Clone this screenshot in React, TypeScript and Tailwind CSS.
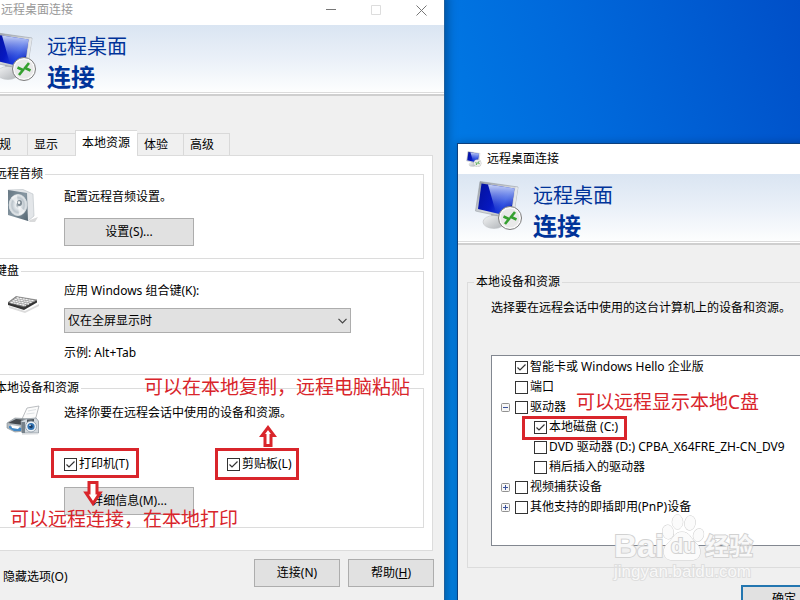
import type { ReactNode } from "react";
import clsx from "clsx";

function ComputerIcon({ className }: { className: string }) {
  return (
    <svg viewBox="0 0 50 50" className={className} aria-hidden="true">
      <defs>
        <linearGradient id="screen" x1="0" y1="0.2" x2="1" y2="0.6">
          <stop offset="0" stopColor="#0412a0" />
          <stop offset="0.45" stopColor="#0618c0" />
          <stop offset="0.75" stopColor="#1a3cdc" />
          <stop offset="1" stopColor="#0a20b8" />
        </linearGradient>
        <linearGradient id="glare" x1="0" y1="0" x2="0" y2="1">
          <stop offset="0" stopColor="#d3defa" stopOpacity="0.95" />
          <stop offset="0.5" stopColor="#7f9af0" stopOpacity="0.6" />
          <stop offset="1" stopColor="#3a5ae0" stopOpacity="0" />
        </linearGradient>
        <linearGradient id="frame" x1="0" y1="0" x2="1" y2="1">
          <stop offset="0" stopColor="#8d949c" />
          <stop offset="0.5" stopColor="#d5d8dc" />
          <stop offset="1" stopColor="#a4a9ae" />
        </linearGradient>
        <linearGradient id="stand" x1="0" y1="0" x2="1" y2="1">
          <stop offset="0" stopColor="#f3f4f5" />
          <stop offset="1" stopColor="#aeb2b6" />
        </linearGradient>
      </defs>
      <path d="M17 33 L28 36 L28 43 L18 42 Z" fill="#a8acb0" />
      <ellipse cx="20" cy="42" rx="11" ry="6.500" fill="url(#stand)" stroke="#c0c3c6" strokeWidth="0.6" />
      <path d="M6 1.500 L44 7 L39 39 L1.500 31 Z" fill="url(#frame)" stroke="#9aa0a6" strokeWidth="0.6" />
      <path d="M41.500 7 L44 7.400 L39 39 L37 38 Z" fill="#e4e7ea" />
      <path d="M7.500 3.500 L40.500 8.500 L36.500 36.500 L4 29 Z" fill="url(#screen)" />
      <path d="M14 4.600 L40.500 8.500 L38 25 L22 33 Z" fill="url(#glare)" />
      <circle cx="36" cy="38" r="11.500" fill="#fafafa" stroke="#7c7c7c" strokeWidth="1" />
      <circle cx="36" cy="38" r="9.600" fill="#e9e9e9" />
      <g fill="none" stroke="#35a02f" strokeWidth="2.600">
        <path d="M29.500 36.500 L35 39 L31 44" />
        <path d="M42.500 39.500 L37 37 L41 32" />
      </g>
    </svg>
  );
}

function SpeakerIcon() {
  return (
    <svg viewBox="0 0 36 36" className="h-9 w-9 shrink-0" aria-hidden="true">
      <defs>
        <linearGradient id="spk" x1="0" y1="0" x2="1" y2="1">
          <stop offset="0" stopColor="#667783" />
          <stop offset="0.5" stopColor="#8797a2" />
          <stop offset="1" stopColor="#526470" />
        </linearGradient>
        <radialGradient id="cone">
          <stop offset="0" stopColor="#8f9aa2" />
          <stop offset="0.3" stopColor="#e9edf0" />
          <stop offset="0.7" stopColor="#bcc5cc" />
          <stop offset="1" stopColor="#eef1f3" />
        </radialGradient>
      </defs>
      <path d="M24 31 L32 28 L29 33 L23 33 Z" fill="#d9dadb" />
      <path d="M2 1 L17 0.500 L27 5 L28 27 L22 32 Z" fill="#e3e6e9" stroke="#b9c0c5" strokeWidth="0.6" />
      <path d="M2 1 L21 4 L22 32 L2 26 Z" fill="url(#spk)" />
      <ellipse cx="12" cy="16" rx="8.800" ry="10.500" fill="url(#cone)" stroke="#d6dce0" />
      <path d="M12 16 L5 9 A9 10 0 0 1 11 6 Z M12 16 L19 22 A9 10 0 0 1 13 26 Z" fill="#fff" opacity="0.6" />
      <ellipse cx="13.500" cy="14" rx="2.500" ry="3" fill="#7e8b94" />
      <ellipse cx="13" cy="13.400" rx="1.200" ry="1.500" fill="#f4f6f7" />
    </svg>
  );
}

function KeyboardIcon() {
  return (
    <svg viewBox="0 0 36 36" className="h-9 w-9 shrink-0" aria-hidden="true">
      <path d="M3 23 L19 28 L33 21 L33 23 L19 30 L3 25 Z" fill="#dcdcdc" />
      <path d="M2 19 L2 22 L18 27 L31 19.500 L31 17.500 Z" fill="#343434" />
      <path d="M2 19.500 L10 13.500 L31 17 L18 24 Z" fill="#8f8f8f" stroke="#666" strokeWidth="0.6" />
      <g stroke="#f4f4f4" strokeWidth="1.400" strokeDasharray="2.400 0.600">
        <path d="M10.500 14.800 L28.500 18" />
        <path d="M8.500 16.300 L26 19.500" />
        <path d="M6.500 17.800 L23 21" />
        <path d="M4.500 19.300 L20 22.500" />
      </g>
    </svg>
  );
}

function DevicesIcon() {
  return (
    <svg viewBox="0 0 36 36" className="h-9 w-9 shrink-0" aria-hidden="true">
      <path d="M21 3 L33 1 L29 16 L16 14 Z" fill="#fbfbfb" stroke="#a9adb1" strokeWidth="0.8" />
      <path d="M22 6 L30 4.500 M20.500 9 L28.500 8" stroke="#dde1e4" />
      <path d="M1 18 L9 13 L24 14 L19 26 L9 27 L1 23 Z" fill="#b5bcc2" stroke="#81898f" strokeWidth="0.6" />
      <path d="M2 18 L10 14 L22 15 L17 20 Z" fill="#44494e" />
      <path d="M3 21 L16 23 L15 26 L8 26 L3 23 Z" fill="#4388c4" />
      <path d="M5 20 L14 21.500 L12 24 L6 23 Z" fill="#fff" />
      <path d="M15 16 L20 14 L30 13 L32.500 16 L32.500 28 L16 28 Z" fill="#d3d9de" stroke="#87919a" strokeWidth="0.7" />
      <path d="M15.500 17 L19 17 L19 28 L16 28 Z" fill="#77828b" />
      <path d="M21 14.500 L28 14 L28 17 L21 17 Z" fill="#4b545c" />
      <circle cx="25" cy="21.500" r="5.500" fill="#eef3f7" stroke="#8b98a3" strokeWidth="0.8" />
      <circle cx="25" cy="21.500" r="3.600" fill="#3475b4" />
      <circle cx="25" cy="21.500" r="1.700" fill="#173b66" />
      <circle cx="24" cy="20.300" r="0.800" fill="#fff" />
      <path d="M16 29.500 L32 29" stroke="#e4e6e8" />
    </svg>
  );
}

function Checkbox({ label, checked = false }: { label: string; checked?: boolean }) {
  return (
    <label className="flex items-center gap-0.5 leading-4 whitespace-nowrap">
      <span className="grid">
        <input
          type="checkbox"
          defaultChecked={checked}
          className="peer col-start-1 row-start-1 h-[13px] w-[13px] appearance-none border border-[#333] bg-white"
        />
        <svg
          viewBox="0 0 13 13"
          className="pointer-events-none invisible col-start-1 row-start-1 h-[13px] w-[13px] peer-checked:visible"
          aria-hidden="true"
        >
          <path d="M2.500 6.500 L5 9 L10.500 3.500" fill="none" stroke="#333" strokeWidth="1.200" />
        </svg>
      </span>
      {label}
    </label>
  );
}

function PushButton({ children, className }: { children: ReactNode; className?: string }) {
  return (
    <button type="button" className={clsx("h-7 border border-[#adadad] bg-[#e1e1e1] leading-4", className)}>
      {children}
    </button>
  );
}

function Banner() {
  return (
    <header>
      <div className="flex h-[67px] gap-[9px] bg-linear-to-b from-[#dae5f2] via-[#eaf0f8] to-[#fdfefe] pt-[6px] pl-4">
        <ComputerIcon className="h-[50px] w-[50px] shrink-0" />
        <h1 className="pt-0.5 text-[#003399]">
          <span className="block text-[20px] leading-7">远程桌面</span>
          <strong className="block text-[24px] leading-8 font-bold">连接</strong>
        </h1>
      </div>
      <div className="h-1 border-t border-b-2 border-t-[#dcdcdc] border-b-[#cfcfcf] bg-white" />
    </header>
  );
}

function TitleBar({ active = false }: { active?: boolean }) {
  return (
    <div className={clsx("flex h-[30px] items-center bg-white pl-2", active ? "text-black" : "text-[#999]")}>
      <ComputerIcon className="mr-[5px] h-4 w-4" />
      <span className="flex-1">远程桌面连接</span>
      {!active && (
        <>
          <button type="button" aria-label="最小化" className="flex h-full w-[45px] items-center justify-center">
            <svg viewBox="0 0 11 11" className="h-[11px] w-[11px]">
              <path d="M0 4.500 H10" stroke="#777" />
            </svg>
          </button>
          <button type="button" aria-label="最大化" disabled className="flex h-full w-[45px] items-center justify-center">
            <svg viewBox="0 0 11 11" className="h-[11px] w-[11px]">
              <path d="M0.500 0.500 H9.500 V9.500 H0.500 Z" fill="none" stroke="#ddd" />
            </svg>
          </button>
        </>
      )}
      <button type="button" aria-label="关闭" className="flex h-full w-[45px] items-center justify-center">
        <svg viewBox="0 0 11 11" className="h-[11px] w-[11px]">
          <path d="M0.500 0.500 L10.500 10.500 M10.500 0.500 L0.500 10.500" fill="none" stroke="#777" />
        </svg>
      </button>
    </div>
  );
}

function Group({ legend, icon, className, children }: { legend: string; icon: ReactNode; className: string; children: ReactNode }) {
  return (
    <fieldset className="min-w-0 border border-[#dcdcdc]">
      <legend className="ml-px px-0.5 leading-4">{legend}</legend>
      <div className={clsx("flex gap-[22px] pl-[14px]", className)}>
        {icon}
        <div className="flex-1">{children}</div>
      </div>
    </fieldset>
  );
}

const TABS = [
  { name: "常规", width: "w-[47px]" },
  { name: "显示", width: "w-12" },
  { name: "本地资源", width: "w-[62px]" },
  { name: "体验", width: "w-[46px]" },
  { name: "高级", width: "w-[47px]" },
];

function OptionsWindow() {
  return (
    <section className="absolute -top-[6px] -left-[29px] min-h-[620px] w-[474px] border border-[#1f5f9c] bg-[#f0f0f0] shadow-[2px_0_10px_rgba(0,0,0,0.35)]">
      <TitleBar />
      <Banner />
      <div role="tablist" className="mt-[34px] flex items-end pl-2">
        {TABS.map((tab) => {
          const selected = tab.name === "本地资源";
          return (
            <button
              key={tab.name}
              type="button"
              role="tab"
              aria-selected={selected}
              className={clsx(
                "border-t border-l border-[#d9d9d9] pl-[6px] text-left leading-4 last:border-r",
                tab.width,
                selected ? "relative -mb-px h-[26px] bg-white pb-px" : "h-[22px]",
              )}
            >
              {tab.name}
            </button>
          );
        })}
      </div>
      <div role="tabpanel" className="mr-[11px] ml-[10px] flex flex-col border border-[#dcdcdc] bg-white px-2 pt-[10px] pb-[22px]">
        <Group legend="远程音频" icon={<SpeakerIcon />} className="pt-[7px] pb-3">
          <p className="leading-4">配置远程音频设置。</p>
          <PushButton className="mt-[13px] w-[130px]">设置(S)...</PushButton>
        </Group>
        <div className="pt-1">
          <Group legend="键盘" icon={<KeyboardIcon />} className="pt-1 pb-[13px]">
            <label htmlFor="keys" className="block leading-4">
              应用 Windows 组合键(K):
            </label>
            <div className="mt-[9px] grid w-[287px] items-center">
              <select
                id="keys"
                className="col-start-1 row-start-1 h-[25px] appearance-none border border-[#adadad] bg-[#e1e1e1] pl-[3px]"
              >
                <option>仅在全屏显示时</option>
              </select>
              <svg
                viewBox="0 0 9 6"
                className="pointer-events-none col-start-1 row-start-1 mr-1 h-[6px] w-[9px] justify-self-end"
                aria-hidden="true"
              >
                <path d="M0.500 0.800 L4.500 4.800 L8.500 0.800" fill="none" stroke="#444" strokeWidth="1.200" />
              </svg>
            </div>
            <p className="mt-3 leading-4">示例: Alt+Tab</p>
          </Group>
        </div>
        <div className="pt-[5px]">
          <Group legend="本地设备和资源" icon={<DevicesIcon />} className="pt-[9px] pb-3">
            <p className="leading-4">选择你要在远程会话中使用的设备和资源。</p>
            <div className="mt-[35px] grid grid-cols-[163px_1fr]">
              <Checkbox label="打印机(T)" checked />
              <Checkbox label="剪贴板(L)" checked />
            </div>
            <PushButton className="mt-[15px] w-[130px]">详细信息(M)...</PushButton>
          </Group>
        </div>
      </div>
      <footer className="flex items-center gap-2 pt-2 pr-[10px] pl-[7px]">
        <button type="button" className="mr-auto flex items-center gap-1 pt-2 leading-4">
          <svg viewBox="0 0 20 20" className="h-5 w-5" aria-hidden="true">
            <circle cx="10" cy="10" r="8" fill="#fff" stroke="#777" />
            <path d="M6 12 L10 8 L14 12" fill="none" stroke="#444" strokeWidth="1.500" />
          </svg>
          隐藏选项(O)
        </button>
        <PushButton className="w-[86px]">连接(N)</PushButton>
        <PushButton className="w-[86px]">
          帮助(<u>H</u>)
        </PushButton>
      </footer>
    </section>
  );
}

type Device = { name: string; checked?: boolean; level?: number; expand?: "plus" | "minus" };

const DEVICES: Device[] = [
  { name: "智能卡或 Windows Hello 企业版", checked: true },
  { name: "端口" },
  { name: "驱动器", expand: "minus" },
  { name: "本地磁盘 (C:)", checked: true, level: 1 },
  { name: "DVD 驱动器 (D:) CPBA_X64FRE_ZH-CN_DV9", level: 1 },
  { name: "稍后插入的驱动器", level: 1 },
  { name: "视频捕获设备", expand: "plus" },
  { name: "其他支持的即插即用(PnP)设备", expand: "plus" },
];

function Expander({ kind }: { kind: "plus" | "minus" }) {
  return (
    <button type="button" aria-label={kind === "plus" ? "展开" : "折叠"}>
      <svg viewBox="0 0 9 9" className="h-[9px] w-[9px]">
        <rect x="0.500" y="0.500" width="8" height="8" rx="1" fill="#f6f6f6" stroke="#919191" />
        <path d="M2 4.500 H7" stroke="#3c539b" />
        {kind === "plus" && <path d="M4.500 2 V7" stroke="#3c539b" />}
      </svg>
    </button>
  );
}

function DevicesWindow() {
  return (
    <section className="absolute top-[143px] left-[457px] min-h-[480px] w-[420px] border border-[#0d3f7c] bg-[#f0f0f0] shadow-[0_0_8px_rgba(0,0,0,0.25)]">
      <TitleBar active />
      <Banner />
      <fieldset className="mx-[9px] mt-[29px] border border-[#dcdcdc] pb-[21px]">
        <legend className="ml-[6px] px-0.5 leading-4">本地设备和资源</legend>
        <p className="mt-[10px] ml-[23px] leading-4 whitespace-nowrap">选择要在远程会话中使用的这台计算机上的设备和资源。</p>
        <ul className="mt-[39px] mr-5 ml-[23px] h-[191px] overflow-hidden border border-[#828790] bg-white pt-px">
          {DEVICES.map((device) => (
            <li key={device.name} className="flex h-5 items-center pl-[9px]">
              <span className={clsx("flex shrink-0", device.level ? "w-[33px]" : "w-[14px]")}>
                {device.expand && <Expander kind={device.expand} />}
              </span>
              <Checkbox label={device.name} checked={device.checked} />
            </li>
          ))}
        </ul>
      </fieldset>
      <footer className="flex gap-2 pt-[17px] pl-[283px]">
        <button type="button" className="h-7 w-[86px] border-2 border-[#2376b0] bg-[#e1e1e1] leading-4">
          确定
        </button>
      </footer>
    </section>
  );
}

const NOTE = "absolute text-[19px] leading-6 whitespace-nowrap text-[#d9252b]";
const FRAME = "absolute border-3 border-[#d9252b]";

function Annotations() {
  return (
    <div className="pointer-events-none absolute inset-0">
      <p className={clsx(NOTE, "top-[375px] left-[144px]")}>可以在本地复制，远程电脑粘贴</p>
      <p className={clsx(NOTE, "top-[507px] left-[10px]")}>可以远程连接，在本地打印</p>
      <p className={clsx(NOTE, "top-[390px] left-[576px]")}>可以远程显示本地C盘</p>
      <div className={clsx(FRAME, "top-[448px] left-[51px] h-[30px] w-[88px]")} />
      <div className={clsx(FRAME, "top-[448px] left-[215px] h-8 w-[84px]")} />
      <div className={clsx(FRAME, "top-[416px] left-[522px] h-6 w-[105px]")} />
      <svg viewBox="0 0 20 26" className="absolute top-[481px] left-[83px] h-[26px] w-5" aria-hidden="true">
        <path d="M6 1.500 H14 V12 H17 L10 22.500 L3 12 H6 Z" fill="#fff" stroke="#d9252b" strokeWidth="3" />
      </svg>
      <svg viewBox="0 0 20 23" className="absolute top-[425px] left-[258px] h-[23px] w-5" aria-hidden="true">
        <path d="M7 20.500 H13 V10.500 H16 L10 2.500 L4 10.500 H7 Z" fill="#fff" stroke="#d9252b" strokeWidth="3" />
      </svg>
    </div>
  );
}

const OUTLINE = "text-[#f8f8f8] [-webkit-text-stroke:2px_#d2d2d2] [paint-order:stroke_fill]";

function Watermark() {
  return (
    <div className={clsx("pointer-events-none absolute top-[514px] left-[614px] w-36 font-bold", OUTLINE)}>
      <svg viewBox="0 0 44 48" className="absolute top-0 left-[47px] h-12 w-11" fill="#fbfbfb" stroke="#cfcfcf" aria-hidden="true">
        <ellipse cx="7" cy="18" rx="5.500" ry="7" transform="rotate(-12 7 18)" />
        <ellipse cx="16.500" cy="8" rx="5.300" ry="7.200" />
        <ellipse cx="29" cy="9" rx="5.300" ry="7.200" transform="rotate(10 29 9)" />
        <ellipse cx="37.500" cy="21" rx="5" ry="6.500" transform="rotate(20 37.500 21)" />
        <path d="M21 18 C13 18 13 24 7 29 C0 35 2 46 11 46 C17 46 25 46 31 46 C40 46 42 35 35 29 C29 24 29 18 21 18 Z" />
      </svg>
      <div className="relative flex items-center pt-4 leading-8">
        <span className="w-[57px] font-['Liberation_Sans',sans-serif] text-[32px]">Bai</span>
        <span className="w-[34px] font-['Liberation_Sans',sans-serif] text-[20px]">du</span>
        <span className="text-[24px]">经验</span>
      </div>
      <div className="relative font-['Liberation_Sans',sans-serif] text-[17px] leading-5 font-normal [-webkit-text-stroke:2px_#dedede]">
        jingyan.baidu.com
      </div>
    </div>
  );
}

export default function App() {
  return (
    <main className="relative h-screen overflow-hidden bg-[linear-gradient(70deg,#0084ea_50%,#006adc_75%,#004fc8_100%)] font-['Noto_Sans','Noto_Sans_CJK_SC',sans-serif] text-[12px] text-black">
      <OptionsWindow />
      <DevicesWindow />
      <Watermark />
      <Annotations />
    </main>
  );
}
